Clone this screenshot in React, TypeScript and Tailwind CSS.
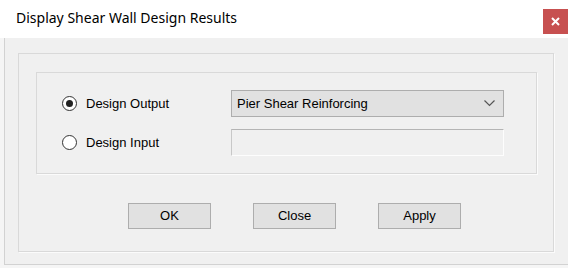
const sans = "font-['Liberation_Sans',Arial,sans-serif]";

const Radio = ({ checked, label }: { checked?: boolean; label: string }) => (
  <div className="flex items-center h-[27px]">
    <div className="w-[15px] h-[15px] rounded-full border border-[#333] bg-white flex items-center justify-center">
      {checked && <div className="w-[7px] h-[7px] rounded-full bg-[#222]" />}
    </div>
    <span className="ml-[9px] text-[13px] text-black">{label}</span>
  </div>
);

const Button = ({ label }: { label: string }) => (
  <button className="w-[83px] h-[26px] border border-[#adadad] bg-[#e1e1e1] text-[13px] text-black flex items-center justify-center">
    {label}
  </button>
);

const App = () => {
  return (
    <div className={`w-[568px] h-[268px] bg-[#f5f5f5] flex flex-col overflow-hidden ${sans}`}>
      {/* title bar */}
      <div className="h-[38px] bg-white flex items-start justify-between shrink-0">
        <span className="pl-[16px] pt-[9px] text-[14px] leading-[18px] text-black font-['Noto_Sans',sans-serif]">
          Display Shear Wall Design Results
        </span>
        <div className="mt-[9px] w-[25px] h-[25px] bg-[#c75050] flex items-center justify-center">
          <svg width="9" height="9" viewBox="0 0 9 9">
            <path d="M1 1 L8 8 M8 1 L1 8" stroke="#fff" strokeWidth="2" />
          </svg>
        </div>
      </div>

      {/* client area */}
      <div className="h-[227px] ml-[4px] border-l border-b border-[#d2d2d2] bg-[#f0f0f0] pl-[13px] pt-[15px]">
        <div className="w-[536px] h-[199px] border border-[#d9d9d9] shadow-[1px_1px_0_#fbfbfb] pt-[18px] pl-[17px]">
          <div className="w-[501px] h-[102px] border border-[#d9d9d9] shadow-[1px_1px_0_#fbfbfb] pl-[25px] pt-[17px] flex flex-col gap-[12px]">
            <div className="flex items-center">
              <div className="w-[169px]">
                <Radio checked label="Design Output" />
              </div>
              <div className="w-[273px] h-[27px] border border-[#adadad] bg-[#e1e1e1] flex items-center justify-between pl-[5px] pr-[8px]">
                <span className="text-[13px] text-black">Pier Shear Reinforcing</span>
                <svg width="11" height="7" viewBox="0 0 11 7">
                  <path d="M0.5 0.5 L5.5 5.5 L10.5 0.5" stroke="#555" strokeWidth="1.2" fill="none" />
                </svg>
              </div>
            </div>
            <div className="flex items-center">
              <div className="w-[169px]">
                <Radio label="Design Input" />
              </div>
              <div className="w-[273px] h-[27px] border-t border-l border-t-[#b4b4b4] border-l-[#c8c8c8] border-b border-r border-b-[#fdfdfd] border-r-[#fdfdfd] bg-[#f0f0f0]" />
            </div>
          </div>
          <div className="flex gap-[42px] pl-[92px] pt-[29px]">
            <Button label="OK" />
            <Button label="Close" />
            <Button label="Apply" />
          </div>
        </div>
      </div>
    </div>
  );
};

export default App;
